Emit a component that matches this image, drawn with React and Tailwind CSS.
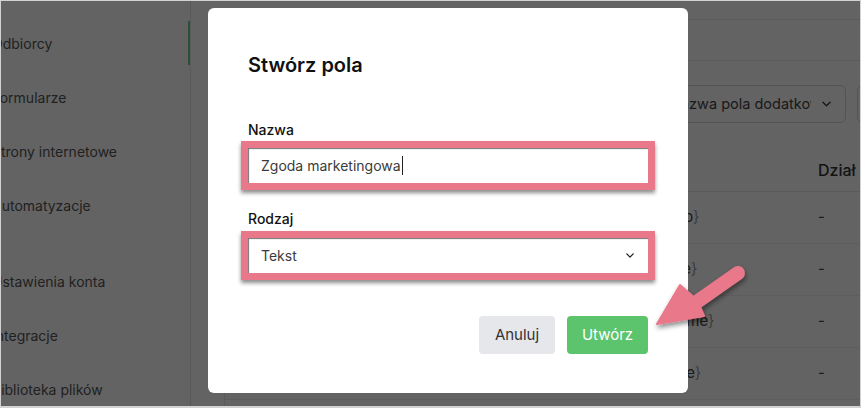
import React from "react";

const navTop = ["Odbiorcy", "Formularze", "Strony internetowe", "Automatyzacje"];
const navBottom = ["Ustawienia konta", "Integracje", "Biblioteka plików"];

const tags = ["miasto", "phone", "surname", "source"];

const Chevron = ({ className }) => (
  <svg viewBox="0 0 10 6" className={className} fill="none">
    <path d="M1 1l4 4 4-4" stroke="currentColor" strokeWidth="1.6" strokeLinecap="round" strokeLinejoin="round" />
  </svg>
);

const NavItem = ({ label, active }) => (
  <div className="relative h-[54px] flex items-center">
    <span className="-ml-[9px] text-[14px] text-[#555] whitespace-nowrap">{label}</span>
    {active && <div className="absolute -right-px top-[5px] w-[3px] h-[44px] bg-[#6dd08a]"></div>}
  </div>
);

// pink callout frame around a form control
const Highlight = ({ children }) => (
  <div className="-mx-[7px] border-[7px] border-[#e9788a] shadow-[0_3px_4px_rgba(0,0,0,0.45)]">
    <div className="h-[35px] bg-white shadow-[inset_1px_1px_1px_rgba(0,0,0,0.55)] flex items-center pl-[13px] pr-[14px] text-[14px] text-[#3b3b3b]">
      {children}
    </div>
  </div>
);

const App = () => {
  return (
    <div className="relative w-[861px] h-[408px] overflow-hidden bg-white border border-b-2 border-[#d2d2d2] font-['Inter',sans-serif]">
      <div className="flex h-full">
        {/* Sidebar */}
        <div className="w-[190px] shrink-0 border-r border-[#e5e5e5] pt-[15px] overflow-hidden">
          {navTop.map((l, i) => (
            <NavItem key={l} label={l} active={i === 0} />
          ))}
          <div className="h-[22px]"></div>
          {navBottom.map((l) => (
            <NavItem key={l} label={l} />
          ))}
        </div>

        {/* Content */}
        <div className="flex-1 overflow-hidden pl-[33px]">
          <div className="w-[753px] mt-[18px] border-l border-t border-[#e5e7eb] h-full">
            <div className="h-[41px] border-b border-[#e5e7eb]"></div>
            <div className="flex gap-[11px] pl-[16px] mt-[24px]">
              <div className="flex-1 h-[38px] border border-[#d1d5db] rounded-md"></div>
              <div className="w-[188px] h-[38px] shrink-0 border border-[#d1d5db] rounded-md flex items-center pl-[11px] pr-[14px]">
                <span className="w-[141px] overflow-hidden whitespace-nowrap text-[14.5px] text-[#444]">Nazwa pola dodatkowego</span>
                <Chevron className="ml-auto w-[9px] h-[6px] text-[#444]" />
              </div>
              <div className="w-[120px] h-[38px] shrink-0 border border-[#d1d5db] rounded-md"></div>
            </div>
            <div className="mt-[25px] h-[44px] border-b border-[#e5e7eb] grid grid-cols-[577px_1fr] items-center pl-[16px] text-[16px] text-[#333] font-medium">
              <span></span>
              <span>Dział</span>
            </div>
            {tags.map((t) => (
              <div key={t} className="h-[52px] border-b border-[#f0f0f0] grid grid-cols-[399px_178px_1fr] items-center pl-[16px] text-[15px] text-[#444]">
                <span></span>
                <span>
                  <span className="text-[#9a9a9a]">{"{"}</span>
                  {t}
                  <span className="text-[#9a9a9a]">{"}"}</span>
                </span>
                <span>-</span>
              </div>
            ))}
          </div>
        </div>
      </div>

      {/* Dim backdrop */}
      <div className="absolute inset-0 bg-[rgba(0,0,0,0.61)]"></div>

      {/* Dialog */}
      <div className="absolute left-[207px] top-[7px] w-[480px] h-[385px] bg-white rounded-md px-[40px] pt-[43px]">
        <h2 className="text-[20px] leading-[28px] font-semibold text-[#111]">Stwórz pola</h2>

        <label className="block mt-[41px] text-[14px] leading-[20px] font-medium text-[#111]">Nazwa</label>
        <div className="mt-[1px]">
          <Highlight>
            <span>Zgoda marketingowa</span>
            <span className="ml-px w-px h-[19px] bg-[#222]"></span>
          </Highlight>
        </div>

        <label className="block mt-[19px] text-[14px] leading-[20px] font-medium text-[#111]">Rodzaj</label>
        <div className="mt-[2px]">
          <Highlight>
            <span>Tekst</span>
            <Chevron className="ml-auto w-[8px] h-[5px] text-[#222]" />
          </Highlight>
        </div>

        <div className="mt-[36px] flex justify-end gap-[12px]">
          <button className="w-[76px] h-[38px] rounded bg-[#e6e7ea] text-[15px] text-[#333]">Anuluj</button>
          <button className="w-[81px] h-[38px] rounded bg-[#5bc46d] text-[15px] text-white">Utwórz</button>
        </div>
      </div>

      {/* Pointer arrow */}
      <svg className="absolute left-0 top-0 pointer-events-none" width="861" height="408" viewBox="0 0 861 408">
        <defs>
          <filter id="arrowShadow" x="-20%" y="-20%" width="140%" height="140%">
            <feDropShadow dx="1" dy="3" stdDeviation="2.5" floodColor="#000" floodOpacity="0.45" />
          </filter>
        </defs>
        <g fill="#e9788a" stroke="#e9788a" filter="url(#arrowShadow)">
          <line x1="737" y1="272" x2="690" y2="305" strokeWidth="14" strokeLinecap="round" />
          <polygon points="656,323 679,284 696,299 703,315" strokeWidth="2" strokeLinejoin="round" />
        </g>
      </svg>
    </div>
  );
};

export default App;
